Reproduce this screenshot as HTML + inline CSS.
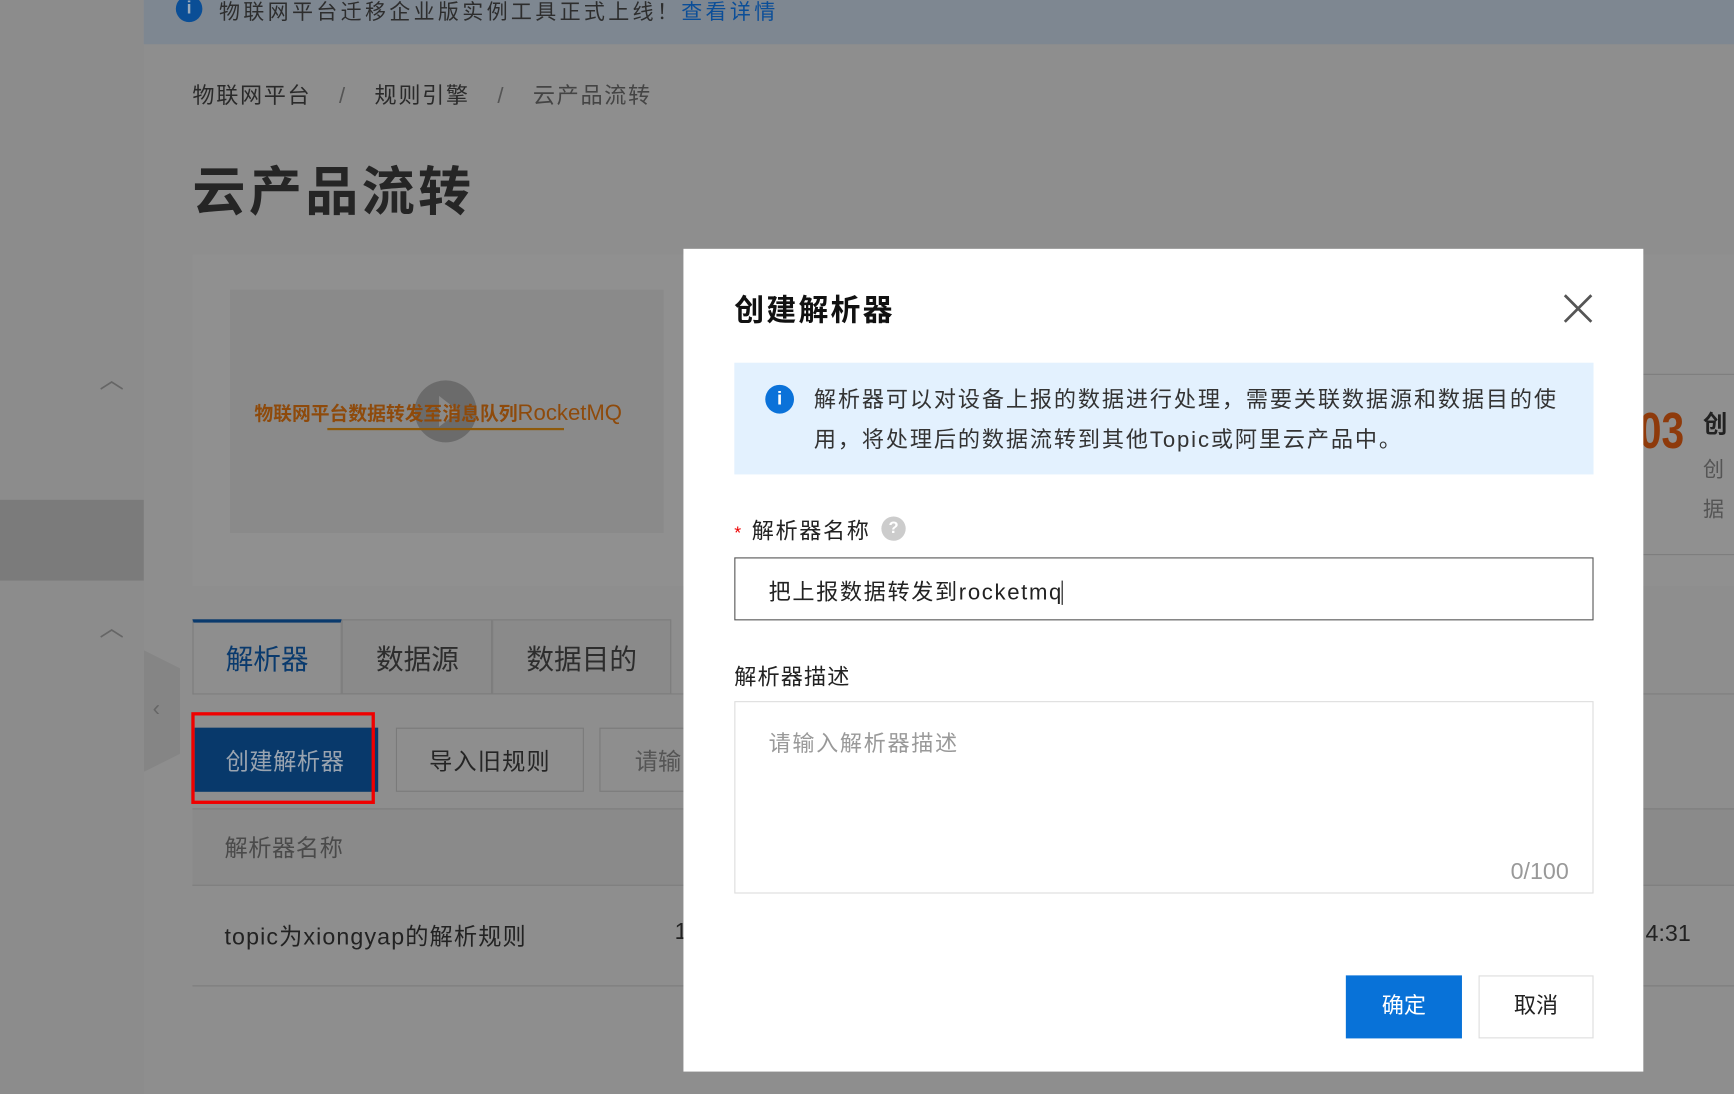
<!DOCTYPE html>
<html><head><meta charset="utf-8"><style>
html,body{margin:0;padding:0;width:1734px;height:1094px;overflow:hidden;background:#8d8d8d}
#w{position:absolute;left:0;top:0;width:1568px;height:989px;transform:scale(1.10587);transform-origin:0 0;font-family:"Liberation Sans","Noto Sans CJK SC",sans-serif;background:#8e8e8e}
.a{position:absolute;white-space:nowrap}
</style></head><body><div id="w">
<div class="a" style="left:0;top:0;width:130px;height:989px;background:#8c8c8c"></div>
<div class="a" style="left:0;top:452px;width:130px;height:73px;background:#7b7b7b"></div>
<div class="a" style="left:90px;top:326px;font-size:22px;color:#666">︿</div>
<div class="a" style="left:90px;top:550px;font-size:22px;color:#666">︿</div>
<div class="a" style="left:130px;top:588px;width:33px;height:110px;background:#858585;clip-path:polygon(0 0,100% 15%,100% 85%,0 100%)"></div>
<div class="a" style="left:138px;top:630px;font-size:20px;color:#666">‹</div>
<div class="a" style="left:130px;top:0;width:1438px;height:40px;background:#7e8791"></div>
<div class="a" style="left:159px;top:-4px;width:24px;height:24px;border-radius:50%;background:#0a4e96;color:#9ab;font-size:16px;text-align:center;line-height:24px;font-weight:bold">i</div>
<div class="a" style="left:198px;top:-4px;font-size:19px;color:#2d2d2d;letter-spacing:3px">物联网平台迁移企业版实例工具正式上线！<span style="color:#0b4e98">查看详情</span></div>
<div class="a" style="left:174px;top:70px;font-size:20px;color:#2a2a2a;letter-spacing:1.5px">物联网平台 <span style="color:#555;margin:0 18px">/</span> 规则引擎 <span style="color:#555;margin:0 18px">/</span> <span style="color:#444">云产品流转</span></div>
<div class="a" style="left:174px;top:134px;font-size:48px;font-weight:bold;color:#252525;letter-spacing:3px">云产品流转</div>
<div class="a" style="left:174px;top:230px;width:1394px;height:300px;background:#909090"></div>
<div class="a" style="left:208px;top:262px;width:392px;height:220px;background:#8a8a8a"></div>
<div class="a" style="left:375px;top:344px;width:56px;height:56px;border-radius:50%;background:#6b6b6b"></div>
<div class="a" style="left:397px;top:358px;width:0;height:0;border-left:18px solid #8a8a8a;border-top:14px solid transparent;border-bottom:14px solid transparent"></div>
<div class="a" style="left:230px;top:360px;font-size:17px;font-weight:bold;color:#8e4a0b">物联网平台数据转发至消息队列<span style="font-weight:normal;font-size:20px">RocketMQ</span></div>
<div class="a" style="left:296px;top:387px;width:214px;height:2px;background:#8e5a0b"></div>
<div class="a" style="left:1486px;top:338px;width:82px;height:162px;background:#909090;border-top:1px solid #7d7d7d;border-bottom:1px solid #7d7d7d"></div>
<div class="a" style="left:1482px;top:362px;font-size:46px;font-weight:bold;color:#8e3a0b;transform:scaleX(0.8);transform-origin:0 0">03</div>
<div class="a" style="left:1540px;top:366px;font-size:22px;font-weight:bold;color:#222">创</div>
<div class="a" style="left:1540px;top:408px;font-size:19px;color:#555;line-height:36px">创<br>据</div>
<div class="a" style="left:174px;top:560px;width:135px;height:68px;border:1px solid #7d7d7d;border-top:3px solid #0a3a6d;box-sizing:border-box"></div>
<div class="a" style="left:309px;top:560px;width:136px;height:68px;border:1px solid #7d7d7d;box-sizing:border-box;background:#8a8a8a"></div>
<div class="a" style="left:445px;top:560px;width:162px;height:68px;border:1px solid #7d7d7d;box-sizing:border-box;background:#8a8a8a"></div>
<div class="a" style="left:309px;top:627px;width:1259px;height:1px;background:#7d7d7d"></div>
<div class="a" style="left:204px;top:577px;font-size:25px;color:#0a3a6d">解析器</div>
<div class="a" style="left:340px;top:577px;font-size:25px;color:#2d2d2d">数据源</div>
<div class="a" style="left:476px;top:577px;font-size:25px;color:#2d2d2d">数据目的</div>
<div class="a" style="left:176px;top:658px;width:166px;height:58px;background:#08396b"></div>
<div class="a" style="left:204px;top:673px;font-size:21px;color:#9aa4b0;letter-spacing:0.5px">创建解析器</div>
<div class="a" style="left:173px;top:644px;width:166px;height:83px;border:3px solid #ef0000;box-sizing:border-box"></div>
<div class="a" style="left:358px;top:658px;width:170px;height:58px;border:1px solid #7a7a7a;box-sizing:border-box"></div>
<div class="a" style="left:388px;top:673px;font-size:21px;color:#252525;letter-spacing:1px">导入旧规则</div>
<div class="a" style="left:542px;top:658px;width:120px;height:58px;border:1px solid #7a7a7a;box-sizing:border-box"></div>
<div class="a" style="left:574px;top:673px;font-size:21px;color:#555">请输</div>
<div class="a" style="left:174px;top:731px;width:1394px;height:68px;background:#8a8a8a;border-top:1px solid #7d7d7d;border-bottom:1px solid #7d7d7d"></div>
<div class="a" style="left:203px;top:751px;font-size:21px;color:#4a4a4a;letter-spacing:0.5px">解析器名称</div>
<div class="a" style="left:203px;top:831px;font-size:21px;color:#222;letter-spacing:1px">topic为xiongyap的解析规则</div>
<div class="a" style="left:610px;top:831px;font-size:21px;color:#222">1</div>
<div class="a" style="left:1488px;top:833px;font-size:21px;color:#222">4:31</div>
<div class="a" style="left:174px;top:891px;width:1394px;height:1px;background:#7d7d7d"></div>

<div class="a" style="left:618px;top:225px;width:868px;height:744px;background:#fff"></div>
<div class="a" style="left:664px;top:259px;font-size:27px;font-weight:bold;color:#111;letter-spacing:2px">创建解析器</div>
<svg class="a" style="left:1413px;top:265px" width="28" height="28"><path d="M2 2L26 26M26 2L2 26" stroke="#555" stroke-width="2.5"/></svg>
<div class="a" style="left:664px;top:328px;width:777px;height:101px;background:#e3f1fe"></div>
<div class="a" style="left:692px;top:348px;width:26px;height:26px;border-radius:50%;background:#0b72d9;color:#fff;font-size:17px;font-weight:bold;text-align:center;line-height:26px">i</div>
<div class="a" style="left:736px;top:344px;font-size:20px;color:#333;line-height:36px;letter-spacing:1.7px">解析器可以对设备上报的数据进行处理，需要关联数据源和数据目的使<br>用，将处理后的数据流转到其他Topic或阿里云产品中。</div>
<div class="a" style="left:664px;top:464px;font-size:20px;color:#222;letter-spacing:1.5px"><span style="color:#e00;font-size:16px;margin-right:8px">*</span>解析器名称</div>
<div class="a" style="left:797px;top:467px;width:22px;height:22px;border-radius:50%;background:#ccc;color:#fff;font-size:15px;text-align:center;line-height:22px;font-weight:bold">?</div>
<div class="a" style="left:664px;top:504px;width:777px;height:57px;border:1.5px solid #555;box-sizing:border-box"></div>
<div class="a" style="left:695px;top:519px;font-size:20px;color:#222;letter-spacing:1.5px">把上报数据转发到rocketmq<span style="border-left:1.5px solid #111;margin-left:-1px"> </span></div>
<div class="a" style="left:664px;top:596px;font-size:20px;color:#222;letter-spacing:1px">解析器描述</div>
<div class="a" style="left:664px;top:634px;width:777px;height:174px;border:1.5px solid #ddd;box-sizing:border-box"></div>
<div class="a" style="left:695px;top:656px;font-size:20px;color:#999;letter-spacing:1.5px">请输入解析器描述</div>
<div class="a" style="left:1366px;top:777px;font-size:21px;color:#999">0/100</div>
<div class="a" style="left:1217px;top:882px;width:105px;height:57px;background:#0872d8;color:#fff;font-size:20px;text-align:center;line-height:57px">确定</div>
<div class="a" style="left:1337px;top:882px;width:104px;height:57px;border:1.5px solid #ddd;box-sizing:border-box;color:#222;font-size:20px;text-align:center;line-height:54px">取消</div>
</div></body></html>
